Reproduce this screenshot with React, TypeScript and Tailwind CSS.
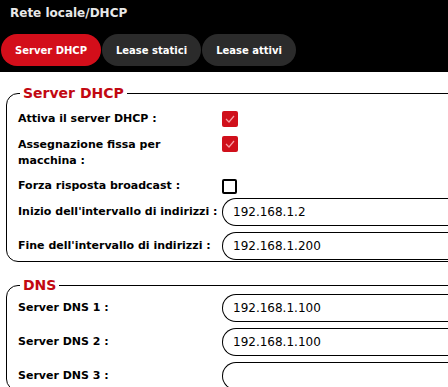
import React, { useState } from "react";

const font = { fontFamily: '"DejaVu Sans", Verdana, sans-serif' };

const tabs = ["Server DHCP", "Lease statici", "Lease attivi"];

const Check = ({ checked }: { checked: boolean }) =>
  checked ? (
    <span className="flex h-[16px] w-[16px] items-center justify-center rounded-[2px] bg-[#d0101b]">
      <svg width="10" height="8" viewBox="0 0 10 8" fill="none">
        <path d="M1 4l3 3 5-6" stroke="#f6a0a6" strokeWidth="1.2" />
      </svg>
    </span>
  ) : (
    <span className="block h-[15px] w-[15px] rounded-[2px] border-2 border-black bg-white" />
  );

const Field = ({ value }: { value: string }) => (
  <div className="flex h-[28px] flex-1 items-center rounded-l-[14px] border border-r-0 border-black pl-[10px] text-[12px] text-black">
    {value}
  </div>
);

const Row = ({
  label,
  children,
  className = "",
}: {
  label: React.ReactNode;
  children: React.ReactNode;
  className?: string;
}) => (
  <div className={`flex items-center ${className}`}>
    <div className="w-[204px] shrink-0 text-[11px] font-bold leading-[16px] text-black">
      {label}
    </div>
    {children}
  </div>
);

export default function App() {
  const [active, setActive] = useState(0);

  return (
    <div className="h-[387px] w-[448px] overflow-hidden bg-white" style={font}>
      <div className="h-[72px] bg-black">
        <div className="px-[10px] pt-[5px] pb-[7px] text-[12px] font-bold leading-[16px] text-[#e8e8e8]">
          Rete locale/DHCP
        </div>
        <div className="mt-[6px] flex gap-[1px] pl-[1px]">
          {tabs.map((t, i) => (
            <button
              key={t}
              onClick={() => setActive(i)}
              className={`h-[32px] rounded-full px-[14px] text-[10px] font-bold text-white ${
                active === i ? "bg-[#d30e1a]" : "bg-[#2b2b2b]"
              }`}
            >
              {t}
            </button>
          ))}
        </div>
      </div>

      <fieldset className="mr-[-20px] ml-[6px] mt-[13px] rounded-[12px] border border-black pl-[11px] pb-[1px]">
        <legend className="ml-[2px] px-[3px] text-[14px] font-bold leading-[16px] text-[#c20812]">
          Server DHCP
        </legend>
        <div className="flex flex-col">
          <Row label="Attiva il server DHCP :" className="mt-[8px] h-[20px]">
            <Check checked />
          </Row>
          <Row
            label={
              <>
                Assegnazione fissa per
                <br />
                macchina :
              </>
            }
            className="mt-[8px] items-start"
          >
            <span className="-mt-[1px]">
              <Check checked />
            </span>
          </Row>
          <Row label="Forza risposta broadcast :" className="mt-[7px] h-[20px]">
            <Check checked={false} />
          </Row>
          <Row label="Inizio dell'intervallo di indirizzi :" className="mt-[2px]">
            <Field value="192.168.1.2" />
          </Row>
          <Row label="Fine dell'intervallo di indirizzi :" className="mt-[6px]">
            <Field value="192.168.1.200" />
          </Row>
        </div>
      </fieldset>

      <fieldset className="mr-[-20px] ml-[6px] mt-[15px] rounded-[12px] border border-black pl-[11px]">
        <legend className="ml-[2px] px-[3px] text-[14px] font-bold leading-[16px] text-[#c20812]">
          DNS
        </legend>
        <div className="flex flex-col gap-[6px] pt-[1px]">
          <Row label="Server DNS 1 :">
            <Field value="192.168.1.100" />
          </Row>
          <Row label="Server DNS 2 :">
            <Field value="192.168.1.100" />
          </Row>
          <Row label="Server DNS 3 :">
            <Field value="" />
          </Row>
        </div>
      </fieldset>
    </div>
  );
}
